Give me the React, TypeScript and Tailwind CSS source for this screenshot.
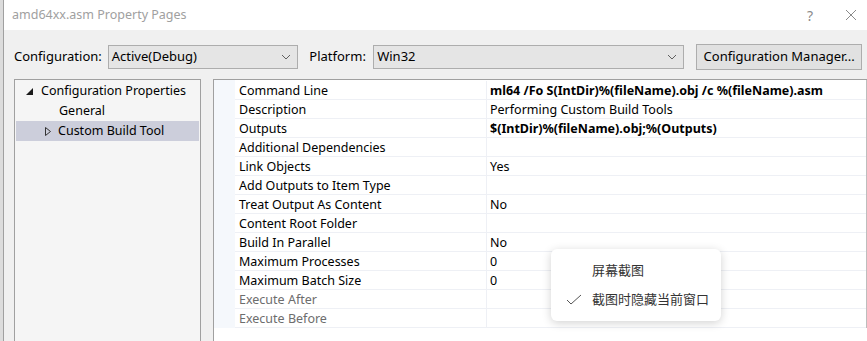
import React from "react";

const rows: { name: string; value: string; bold?: boolean; dim?: boolean }[] = [
  { name: "Command Line", value: "ml64 /Fo S(IntDir)%(fileName).obj /c %(fileName).asm", bold: true },
  { name: "Description", value: "Performing Custom Build Tools" },
  { name: "Outputs", value: "$(IntDir)%(fileName).obj;%(Outputs)", bold: true },
  { name: "Additional Dependencies", value: "" },
  { name: "Link Objects", value: "Yes" },
  { name: "Add Outputs to Item Type", value: "" },
  { name: "Treat Output As Content", value: "No" },
  { name: "Content Root Folder", value: "" },
  { name: "Build In Parallel", value: "No" },
  { name: "Maximum Processes", value: "0" },
  { name: "Maximum Batch Size", value: "0" },
  { name: "Execute After", value: "", dim: true },
  { name: "Execute Before", value: "", dim: true },
];

function Chevron() {
  return (
    <svg width="10" height="6" viewBox="0 0 10 6" className="shrink-0">
      <path d="M1 1 L5 5 L9 1" fill="none" stroke="#606060" strokeWidth="1" />
    </svg>
  );
}

function Combo({ label, width }: { label: string; width: string }) {
  return (
    <div
      className={`${width} h-[24px] flex items-center justify-between border border-[#adadad] bg-[#e5e5e5] pl-[3px] pr-[6px] text-[13px] text-black`}
    >
      <span>{label}</span>
      <Chevron />
    </div>
  );
}

export default function App() {
  return (
    <div
      className="w-[867px] h-[341px] overflow-hidden flex bg-white"
      style={{ fontFamily: '"Noto Sans", "Noto Sans CJK SC", sans-serif' }}
    >
      {/* strip of the window behind */}
      <div className="w-[4px] shrink-0 bg-[#dcdcdc] border-r border-[#a0a0a0]" />

      <div className="flex-1 flex flex-col min-w-0">
        {/* title bar */}
        <div className="h-[30px] shrink-0 bg-white flex items-center pl-[8px] pr-[10px]">
          <span className="text-[12.5px] text-[#a0a0a0]">amd64xx.asm Property Pages</span>
          <span className="ml-auto text-[14px] text-[#8a8a8a] mr-[32px]">?</span>
          <svg width="12" height="12" viewBox="0 0 12 12">
            <path d="M1 1 L11 11 M11 1 L1 11" stroke="#8a8a8a" strokeWidth="1" />
          </svg>
        </div>

        {/* body */}
        <div className="flex-1 bg-[#f0f0f0] flex flex-col">
          <div className="flex items-center h-[26px] mt-[14px] pl-[10px] pr-[5px] text-[13px] text-black">
            <span className="w-[94px]">Configuration:</span>
            <Combo label="Active(Debug)" width="w-[191px]" />
            <span className="ml-[11px] w-[64px]">Platform:</span>
            <Combo label="Win32" width="w-[312px]" />
            <div className="ml-[12px] h-[26px] w-[166px] border border-[#adadad] bg-[#e1e1e1] flex items-center justify-center">
              Configuration Manager...
            </div>
          </div>

          <div className="flex flex-1 mt-[9px] pl-[10px] gap-[12px]">
            {/* tree */}
            <div className="w-[187px] border-t border-l border-r border-[#a0a0a0] bg-[#f5f5f5] pt-[1px] pl-[1px] pr-[1px] text-[12.5px] text-black">
              <div className="h-[20px] flex items-center">
                <svg width="7" height="7" viewBox="0 0 7 7" className="ml-[10px] mr-[8px]">
                  <path d="M7 0 L7 7 L0 7 Z" fill="#1a1a1a" />
                </svg>
                <span>Configuration Properties</span>
              </div>
              <div className="h-[20px] flex items-center pl-[43px]">General</div>
              <div className="h-[20px] flex items-center bg-[#cccedb]">
                <svg width="6" height="9" viewBox="0 0 6 9" className="ml-[29px] mr-[7px]">
                  <path d="M0.5 0.5 L5.5 4.5 L0.5 8.5 Z" fill="none" stroke="#333" strokeWidth="1" />
                </svg>
                <span>Custom Build Tool</span>
              </div>
            </div>

            {/* property grid */}
            <div className="relative flex-1 border-t border-l border-[#a0a0a0] bg-white">
              <div className="flex">
                <div className="w-[21px] shrink-0 bg-[#f5f8fc]" />
                <div className="flex-1 pt-[1px] border-r border-[#bdbdbd]">
                  {rows.map((r) => (
                    <div key={r.name} className="flex h-[19px] border-b border-[#eef0f5] text-[12.5px] leading-[20px]">
                      <div
                        className={`w-[252px] shrink-0 pl-[4px] border-r border-[#eef0f5] ${
                          r.dim ? "text-[#6d6d6d]" : "text-black"
                        }`}
                      >
                        {r.name}
                      </div>
                      <div className={`pl-[3px] whitespace-nowrap text-black ${r.bold ? "font-bold" : ""}`}>
                        {r.value}
                      </div>
                    </div>
                  ))}
                </div>
              </div>

              {/* context menu */}
              <div className="absolute left-[337px] top-[169px] w-[170px] h-[72px] bg-white rounded-[6px] shadow-[0_2px_10px_rgba(0,0,0,0.18)] flex flex-col justify-center gap-[9px] text-[13px] text-[#333]">
                <div className="flex items-center h-[20px]">
                  <span className="w-[41px]" />
                  <span>屏幕截图</span>
                </div>
                <div className="flex items-center h-[20px]">
                  <svg width="41" height="12" viewBox="0 0 41 12">
                    <path d="M16 6 L20 10 L30 1" fill="none" stroke="#555" strokeWidth="1" />
                  </svg>
                  <span>截图时隐藏当前窗口</span>
                </div>
              </div>
            </div>
          </div>
        </div>
      </div>
    </div>
  );
}
